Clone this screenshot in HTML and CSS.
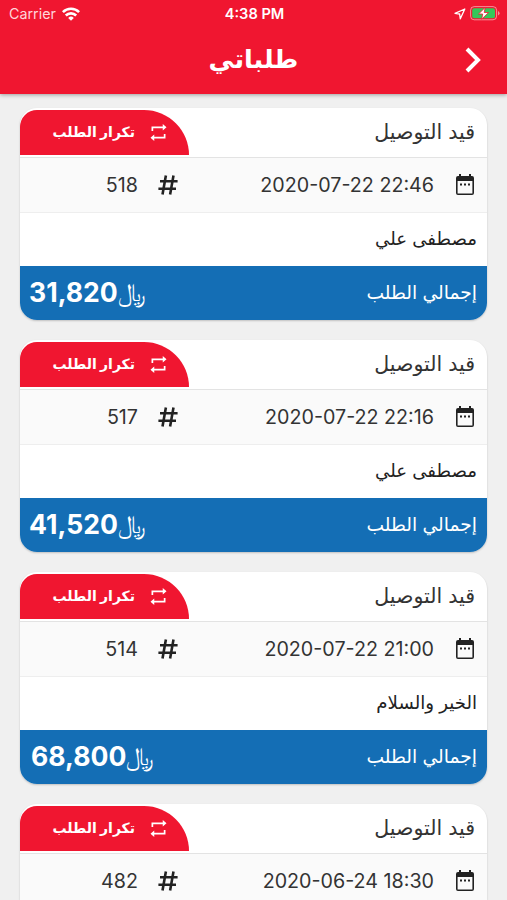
FILE: index.html
```html
<!DOCTYPE html>
<html lang="ar" dir="rtl">
<head>
    <meta charset="UTF-8">
    <meta name="viewport" content="width=device-width, initial-scale=1.0">
    <title>طلباتي</title>
    <link rel="stylesheet" href="styles.css">
</head>
<body>
    <!-- icons -->
    <svg class="sprite" xmlns="http://www.w3.org/2000/svg">
        <symbol id="repeat" viewBox="0 0 18 20">
            <path d="M2.5 8.5V4.5H14M15.5 11.5v4H4" fill="none" stroke="currentColor" stroke-width="1.8"/>
            <path d="M13.5 1l4 3.5-4 3.5zM4.5 12l-4 3.5 4 3.5z" fill="currentColor"/>
        </symbol>
        <symbol id="hash" viewBox="0 0 20 20">
            <path d="M7.9 .5L4.5 19.5M15.5 .5l-3.4 19M2 6.3h17.6M.4 13.7H18" fill="none" stroke="currentColor" stroke-width="2.6"/>
        </symbol>
        <symbol id="calendar" viewBox="0 0 20 22">
            <path d="M3 2h14a2 2 0 0 1 2 2v15a2 2 0 0 1-2 2H3a2 2 0 0 1-2-2V4a2 2 0 0 1 2-2zM2.6 7v12.4h14.8V7z" fill="currentColor" fill-rule="evenodd"/>
            <path d="M4 0h2v3H4zM14 0h2v3h-2zM5 9.5h2v2H5zM9 9.5h2v2H9zM13 9.5h2v2h-2z" fill="currentColor"/>
        </symbol>
    </svg>

    <header class="topbar">
        <div class="status">
            <div class="carrier">
                <span>Carrier</span>
                <svg width="18" height="14" viewBox="0 0 18 14" fill="none" stroke="#fff" stroke-width="2.6">
                    <path d="M.9 5.1a11.5 11.5 0 0 1 16.2 0M3.8 8.5a7.4 7.4 0 0 1 10.4 0"/>
                    <path d="M9 13.8L6.2 10.9a4 4 0 0 1 5.6 0z" fill="#fff" stroke="none"/>
                </svg>
            </div>
            <span class="time">4:38 PM</span>
            <div class="battery">
                <svg width="12" height="12" viewBox="0 0 12 12" fill="none" stroke="#fff" stroke-width="1.3" stroke-linejoin="round">
                    <path d="M10.8 1L1 5.3l4.6.7.7 4.8z"/>
                </svg>
                <svg width="30" height="15" viewBox="0 0 30 15">
                    <rect x=".6" y=".6" width="26" height="13.2" rx="3.6" fill="none" stroke="#fff" stroke-opacity=".5"/>
                    <rect x="2.2" y="2.2" width="22.8" height="10" rx="2" fill="#34c759"/>
                    <path d="M28 5v4.6q1.6-.8 1.6-2.3T28 5z" fill="#fff" fill-opacity=".5"/>
                    <path d="M15.2 1.5L8.5 8h4.2l-1 5.2L18.6 6.5h-4.4z" fill="#fff" stroke="#f01630" stroke-width=".8"/>
                </svg>
            </div>
        </div>
        <div class="navbar">
            <svg class="back" width="16" height="26" viewBox="0 0 16 26" fill="none" stroke="#fff" stroke-width="4">
                <path d="M2 2l11 11L2 24"/>
            </svg>
            <h1>طلباتي</h1>
        </div>
    </header>

    <main class="orders">
        <section class="card">
            <div class="card-head">
                <span class="state">قيد التوصيل</span>
                <button class="again"><svg><use href="#repeat"/></svg><span>تكرار الطلب</span></button>
            </div>
            <div class="info">
                <svg class="cal"><use href="#calendar"/></svg>
                <span class="date">2020-07-22 22:46</span>
                <svg class="hash"><use href="#hash"/></svg>
                <span class="num">518</span>
            </div>
            <div class="customer"><span>مصطفى علي</span></div>
            <div class="total">
                <span class="label">إجمالي الطلب</span>
                <span class="price"><b>31,820</b><i>﷼</i></span>
            </div>
        </section>

        <section class="card">
            <div class="card-head">
                <span class="state">قيد التوصيل</span>
                <button class="again"><svg><use href="#repeat"/></svg><span>تكرار الطلب</span></button>
            </div>
            <div class="info">
                <svg class="cal"><use href="#calendar"/></svg>
                <span class="date">2020-07-22 22:16</span>
                <svg class="hash"><use href="#hash"/></svg>
                <span class="num">517</span>
            </div>
            <div class="customer"><span>مصطفى علي</span></div>
            <div class="total">
                <span class="label">إجمالي الطلب</span>
                <span class="price"><b>41,520</b><i>﷼</i></span>
            </div>
        </section>

        <section class="card">
            <div class="card-head">
                <span class="state">قيد التوصيل</span>
                <button class="again"><svg><use href="#repeat"/></svg><span>تكرار الطلب</span></button>
            </div>
            <div class="info">
                <svg class="cal"><use href="#calendar"/></svg>
                <span class="date">2020-07-22 21:00</span>
                <svg class="hash"><use href="#hash"/></svg>
                <span class="num">514</span>
            </div>
            <div class="customer"><span>الخير والسلام</span></div>
            <div class="total">
                <span class="label">إجمالي الطلب</span>
                <span class="price wide"><b>68,800</b><i>﷼</i></span>
            </div>
        </section>

        <section class="card">
            <div class="card-head">
                <span class="state">قيد التوصيل</span>
                <button class="again"><svg><use href="#repeat"/></svg><span>تكرار الطلب</span></button>
            </div>
            <div class="info">
                <svg class="cal"><use href="#calendar"/></svg>
                <span class="date">2020-06-24 18:30</span>
                <svg class="hash"><use href="#hash"/></svg>
                <span class="num">482</span>
            </div>
        </section>
    </main>
</body>
</html>
```
FILE: styles.css
```css
* {
    box-sizing: border-box;
}

body {
    margin: 0;
    height: 900px;
    overflow: hidden;
    background: #f0f0f0;
    color: #333;
    font-family: Inter, "DejaVu Sans", sans-serif;
}

.sprite {
    display: none;
}

.topbar {
    height: 94px;
    background: #f01630;
    color: #fff;
    box-shadow: 0 1px 4px rgba(0, 0, 0, 0.35);
}

.status {
    direction: ltr;
    display: grid;
    grid-template-columns: 1fr auto 1fr;
    align-items: center;
    height: 27px;
    padding: 0 7px 0 9px;
    font-size: 14.3px;
}

.carrier {
    display: flex;
    align-items: center;
    gap: 6px;
    color: #ffd5da;
}

.time {
    font-size: 14.6px;
    font-weight: 600;
}

.battery {
    display: flex;
    align-items: center;
    justify-content: flex-end;
    gap: 4px;
}

.navbar {
    display: grid;
    grid-template-columns: 60px 1fr 60px;
    align-items: center;
    height: 66px;
}

.back {
    margin-right: 26px;
}

h1 {
    margin: 0;
    padding-bottom: 2px;
    font-size: 25.5px;
    line-height: 38px;
    text-align: center;
}

.orders {
    display: flex;
    flex-direction: column;
    gap: 20px;
    padding: 14px 20px 0;
}

.card {
    flex: none;
    height: 212px;
    border-radius: 17px;
    overflow: hidden;
    background: #fff;
    box-shadow: 0 1px 2px rgba(0, 0, 0, 0.2);
}

.card:last-child {
    height: 96px;
    border-radius: 17px 17px 0 0;
}

.card-head {
    display: flex;
    justify-content: space-between;
    height: 50px;
    padding-top: 2px;
    border-bottom: 1px solid #e3e3e3;
}

.state {
    padding-right: 12px;
    font-size: 20.6px;
    line-height: 43px;
}

.again {
    display: flex;
    align-items: center;
    gap: 15px;
    width: 169px;
    height: 45px;
    padding: 0 22px 1px 0;
    border: none;
    border-radius: 17px 45px 0 0;
    background: #f01630;
    color: #fff;
    font-family: inherit;
    font-size: 14px;
    font-weight: bold;
    white-space: nowrap;
}

.again span {
    padding-bottom: 2px;
}

.again svg {
    flex: none;
    width: 17px;
    height: 19px;
}

.info {
    display: flex;
    align-items: center;
    height: 54px;
    padding: 0 12px;
    background: #fafafa;
    font-size: 19.7px;
}

.info svg {
    flex: none;
    color: #222;
}

.cal {
    width: 20px;
    height: 22px;
}

.date {
    direction: ltr;
    width: 256px;
    margin-right: 21px;
    text-align: right;
}

.hash {
    width: 20px;
    height: 20px;
}

.num {
    margin-right: 20px;
}

.customer {
    height: 54px;
    padding-right: 10px;
    border-top: 1px solid #eee;
    color: #222;
    font-size: 18.2px;
    line-height: 51px;
}

.total {
    display: flex;
    align-items: center;
    justify-content: space-between;
    height: 54px;
    padding: 0 10px 2px 9px;
    background: #146eb5;
    color: #fff;
}

.label {
    font-size: 18.7px;
}

.price {
    direction: ltr;
    display: flex;
    align-items: center;
    font-size: 26.6px;
}

.wide {
    padding-left: 2px;
}

.price i {
    font-size: 25px;
    font-style: normal;
}
```
